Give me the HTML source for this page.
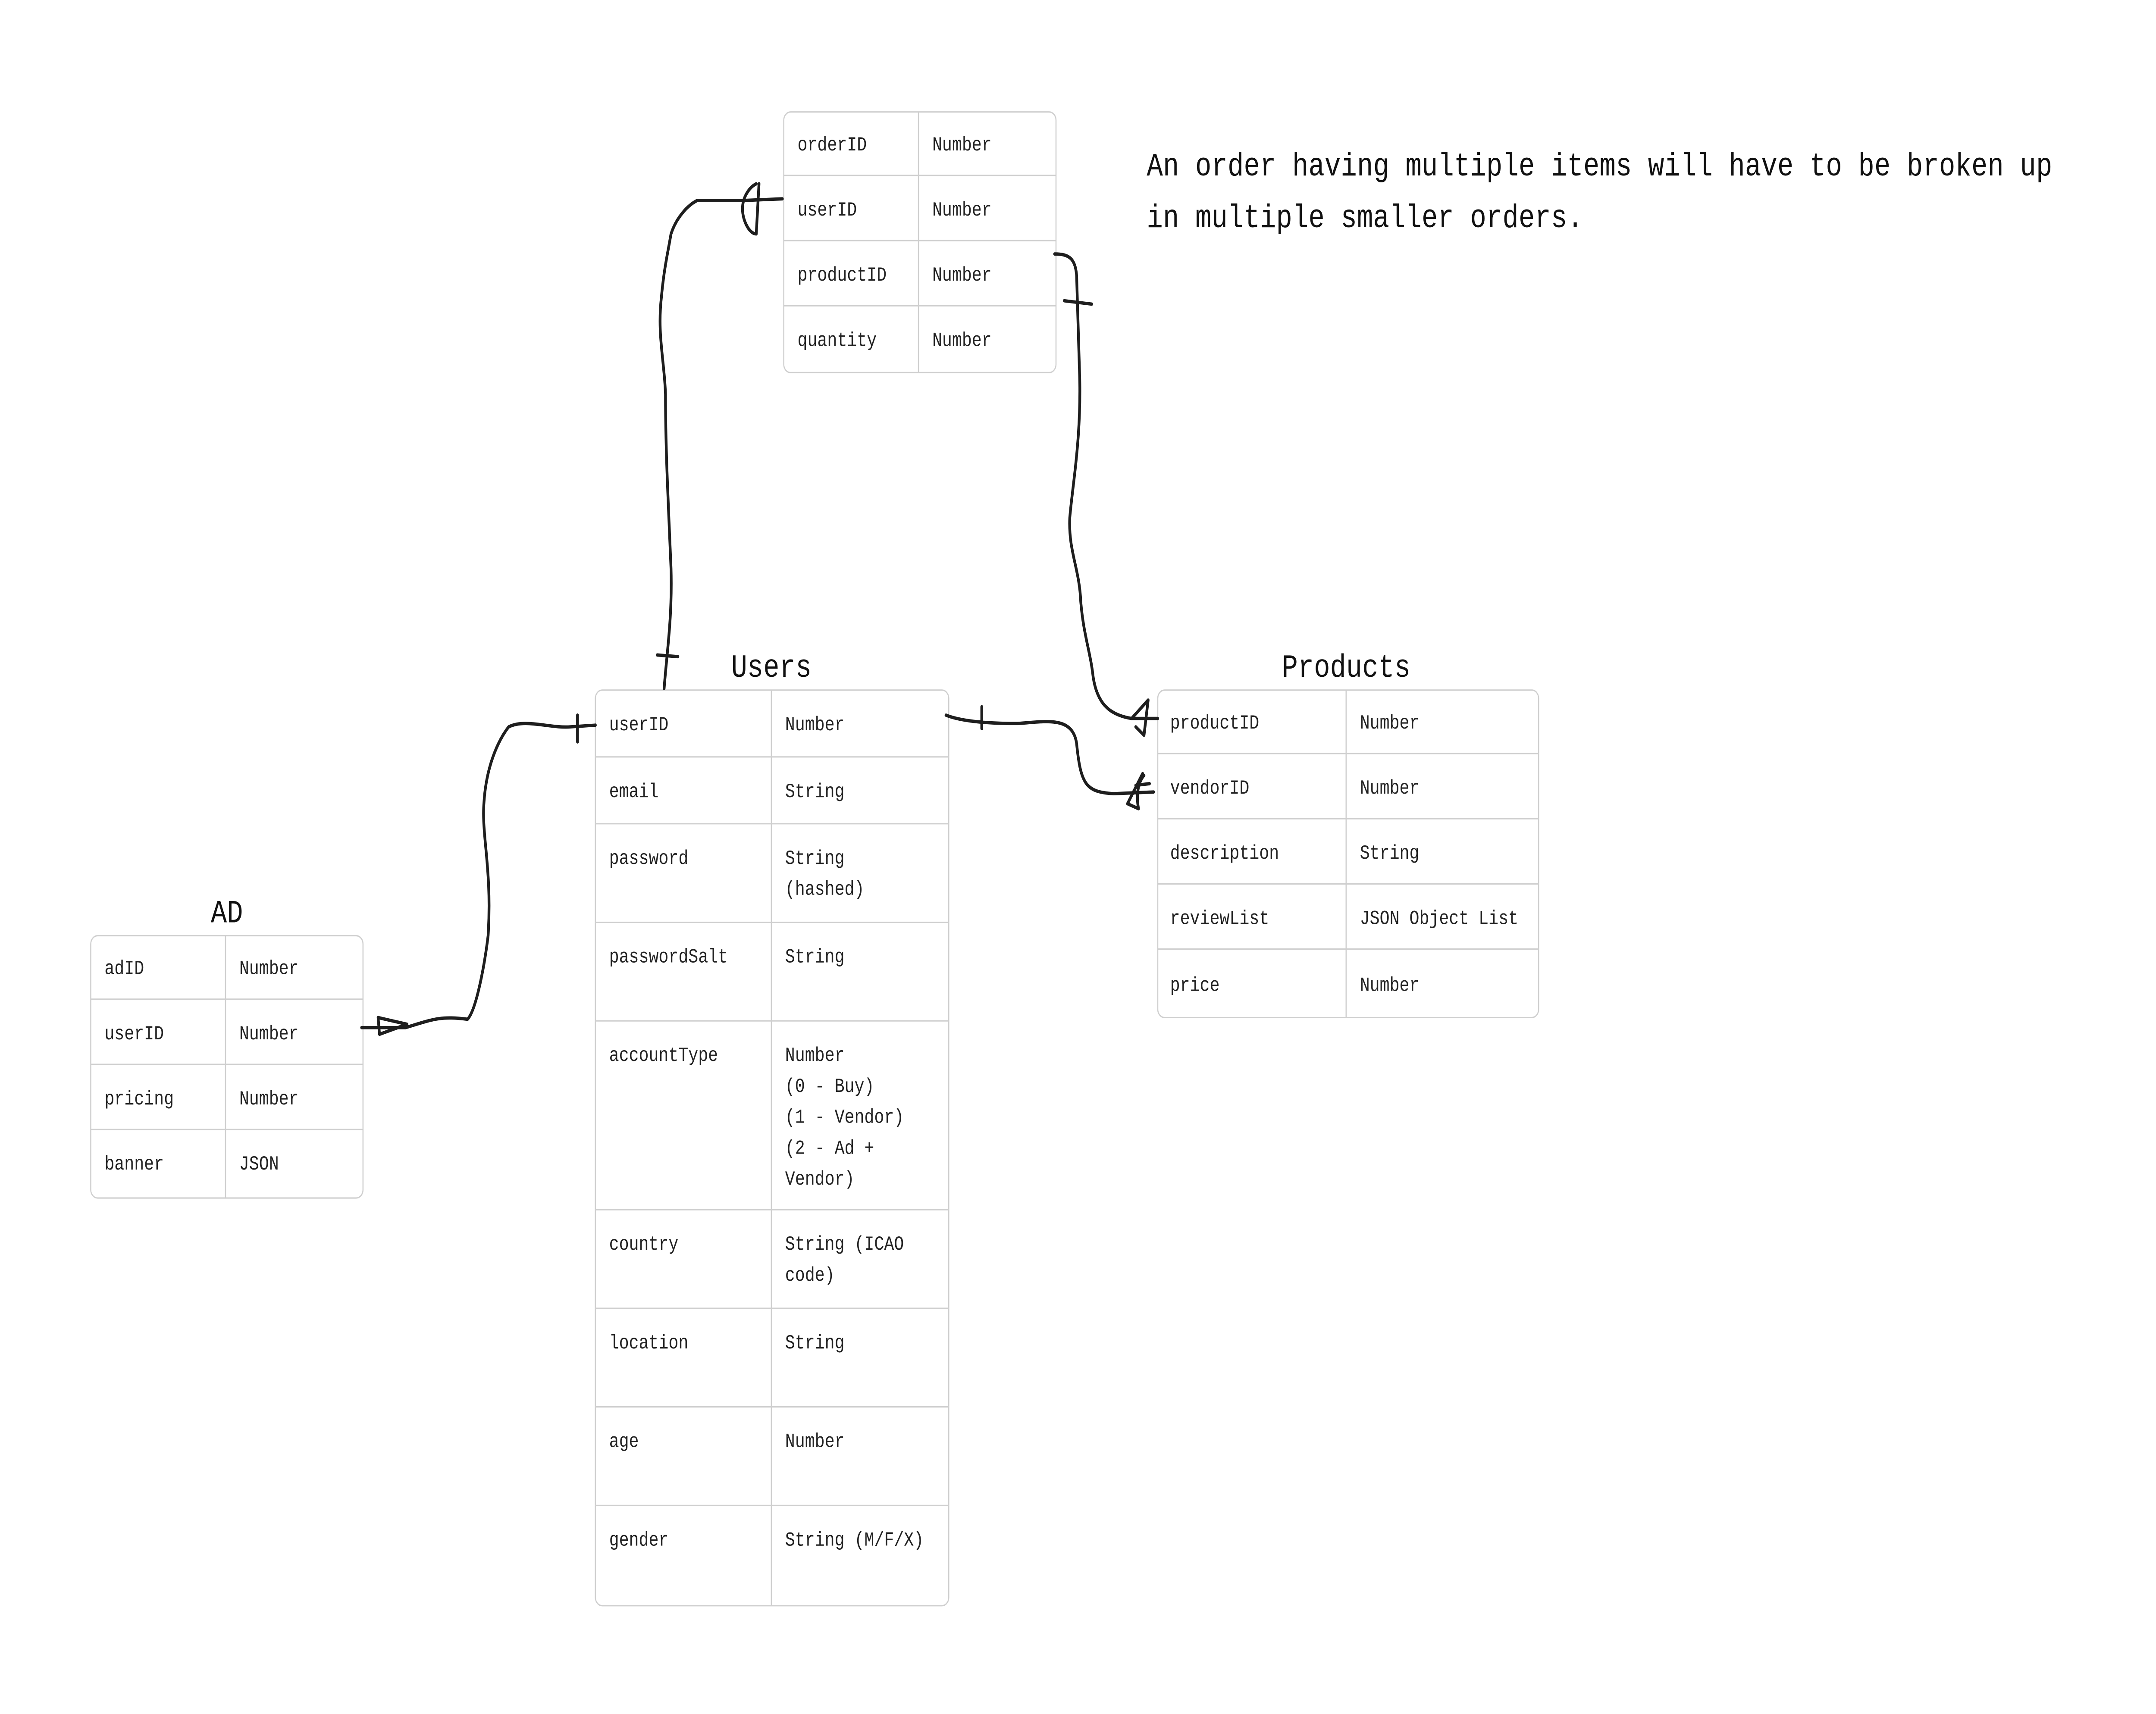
<!DOCTYPE html>
<html><head><meta charset="utf-8"><style>
html,body{margin:0;padding:0;background:#fff;width:100%;height:100%;overflow:hidden}
svg{display:block;position:fixed;left:0;top:0;width:100vw;height:100vh}
text{font-family:"Liberation Mono",monospace;fill:#222;font-size:12px}
.h{font-size:19.5px;fill:#111;text-anchor:middle}
.n{font-size:19.6px;fill:#111}
.g{stroke:#cfcfcf;stroke-width:0.8;fill:none}
.l{fill:none;stroke:#1e1e1e;stroke-width:2;stroke-linecap:round;stroke-linejoin:round}
</style></head><body>
<svg viewBox="0 0 1568 1025.8" preserveAspectRatio="none" xmlns="http://www.w3.org/2000/svg">
<rect x="0" y="0" width="1568" height="1026" fill="#fff"/>

<rect class="g" x="570" y="67" width="198" height="156" rx="5"/>
<path class="g" d="M668,67V223M570,105H768M570,144H768M570,183H768"/>
<text x="580" y="90">orderID</text><text x="678" y="90">Number</text>
<text x="580" y="129">userID</text><text x="678" y="129">Number</text>
<text x="580" y="168">productID</text><text x="678" y="168">Number</text>
<text x="580" y="207">quantity</text><text x="678" y="207">Number</text>

<text class="n" x="834" y="105">An order having multiple items will have to be broken up</text>
<text class="n" x="834" y="136">in multiple smaller orders.</text>

<text class="h" x="561" y="405">Users</text>
<rect class="g" x="433" y="413" width="257" height="548" rx="5"/>
<path class="g" d="M561,413V961M433,453H690M433,493H690M433,552H690M433,611H690M433,724H690M433,783H690M433,842H690M433,901H690"/>
<text x="443" y="437">userID</text><text x="571" y="437">Number</text>
<text x="443" y="477">email</text><text x="571" y="477">String</text>
<text x="443" y="517">password</text><text x="571" y="517">String</text><text x="571" y="535.5">(hashed)</text>
<text x="443" y="576">passwordSalt</text><text x="571" y="576">String</text>
<text x="443" y="635">accountType</text><text x="571" y="635">Number</text><text x="571" y="653.5">(0 - Buy)</text><text x="571" y="672">(1 - Vendor)</text><text x="571" y="690.5">(2 - Ad +</text><text x="571" y="709">Vendor)</text>
<text x="443" y="748">country</text><text x="571" y="748">String (ICAO</text><text x="571" y="766.5">code)</text>
<text x="443" y="807">location</text><text x="571" y="807">String</text>
<text x="443" y="866">age</text><text x="571" y="866">Number</text>
<text x="443" y="925">gender</text><text x="571" y="925">String (M/F/X)</text>

<text class="h" x="979" y="405">Products</text>
<rect class="g" x="842" y="413" width="277" height="196" rx="5"/>
<path class="g" d="M979,413V609M842,451H1119M842,490H1119M842,529H1119M842,568H1119"/>
<text x="851" y="436">productID</text><text x="989" y="436">Number</text>
<text x="851" y="475">vendorID</text><text x="989" y="475">Number</text>
<text x="851" y="514">description</text><text x="989" y="514">String</text>
<text x="851" y="553">reviewList</text><text x="989" y="553">JSON Object List</text>
<text x="851" y="593">price</text><text x="989" y="593">Number</text>

<text class="h" x="165" y="552">AD</text>
<rect class="g" x="66" y="560" width="198" height="157" rx="5"/>
<path class="g" d="M164,560V717M66,598H264M66,637H264M66,676H264"/>
<text x="76" y="583">adID</text><text x="174" y="583">Number</text>
<text x="76" y="622">userID</text><text x="174" y="622">Number</text>
<text x="76" y="661">pricing</text><text x="174" y="661">Number</text>
<text x="76" y="700">banner</text><text x="174" y="700">JSON</text>

<path class="l" d="M483,412 C485,390 489,370 488,340 C486,300 484,270 484,236 C483,215 478,200 481,178 C483,160 486,150 488,140 C492,130 500,123 507,120 L540,120 L569,119"/>
<path class="l" d="M550,110 C545,112 540,118 540,125 C540,132 545,140 550,140 L552,110"/>
<path class="l" d="M478,392 L493,393"/>
<path class="l" d="M767,152 C778,152 782,155 783,165 L785,220 C787,260 780,290 778,310 C777,330 785,340 786,360 C788,380 793,390 795,405 C798,422 808,428 823,430 L842,430"/>
<path class="l" d="M774,180 L794,182"/>
<path class="l" d="M823,430 L835,419 L832,440 L826,435"/>
<path class="l" d="M688,428 C700,432 720,433 740,433 C760,432 780,428 783,445 C786,470 790,474 810,475 L839,474"/>
<path class="l" d="M714,423 L714,436"/>
<path class="l" d="M832,464 C828,468 826,475 828,484 L820,481 L831,463"/>
<path class="l" d="M826,470 L836,469"/>
<path class="l" d="M263,615 L295,615 C315,610 320,608 340,610 C346,605 352,580 355,560 C358,520 350,500 352,480 C354,455 365,440 370,435 C382,430 400,436 415,435 L433,434"/>
<path class="l" d="M420,428 L420,444"/>
<path class="l" d="M296,613 L275,609 L276,619 Z"/>
</svg>
</body></html>
